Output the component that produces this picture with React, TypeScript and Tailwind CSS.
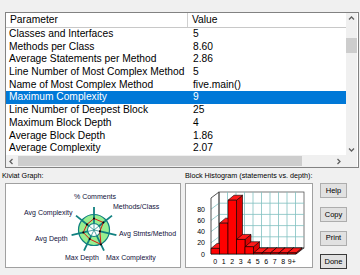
import React from "react";

const rows: [string, string][] = [
  ["Classes and Interfaces", "5"],
  ["Methods per Class", "8.60"],
  ["Average Statements per Method", "2.86"],
  ["Line Number of Most Complex Method", "5"],
  ["Name of Most Complex Method", "five.main()"],
  ["Maximum Complexity", "9"],
  ["Line Number of Deepest Block", "25"],
  ["Maximum Block Depth", "4"],
  ["Average Block Depth", "1.86"],
  ["Average Complexity", "2.07"],
];

const Chevron = ({ dir }: { dir: "up" | "down" | "left" | "right" }) => {
  const pts = {
    up: "3,6.5 5.5,4 8,6.5",
    down: "3,4.5 5.5,7 8,4.5",
    left: "6.5,3 4,5.5 6.5,8",
    right: "4.5,3 7,5.5 4.5,8",
  }[dir];
  return (
    <svg width="11" height="11" viewBox="0 0 11 11">
      <polyline points={pts} fill="none" stroke="#606060" strokeWidth="1.3" />
    </svg>
  );
};

const MetricsList = () => (
  <div className="w-[354px] h-[156px] border border-[#828282] bg-white grid grid-cols-[340px_11px] grid-rows-[142px_12px]">
    <div className="text-[10.25px] text-black">
      <div className="h-[15px] flex border-b border-[#c8c8c8] leading-[14px]">
        <div className="w-[182px] border-r border-[#d0d0d0] pl-[4px]">Parameter</div>
        <div className="pl-[4px]">Value</div>
      </div>
      {rows.map(([name, value], i) => (
        <div
          key={name}
          className={`h-[12.7px] leading-[12.7px] flex ${i === 5 ? "bg-[#0078d7] text-white" : ""}`}
        >
          <div className="w-[182px] pl-[3px] whitespace-nowrap overflow-hidden">{name}</div>
          <div className="pl-[5px]">{value}</div>
        </div>
      ))}
    </div>
    <div className="bg-[#f0f0f0] flex flex-col">
      <Chevron dir="up" />
      <div className="flex-1 pt-[14px]">
        <div className="h-[15px] bg-[#cdcdcd]" />
      </div>
      <Chevron dir="down" />
    </div>
    <div className="bg-[#f0f0f0] flex items-center">
      <Chevron dir="left" />
      <div className="w-[284px] h-[10px] ml-[1px] bg-[#cdcdcd]" />
      <div className="flex-1" />
      <div className="mr-[2px]">
        <Chevron dir="right" />
      </div>
    </div>
    <div className="bg-[#f0f0f0]" />
  </div>
);

const labels: { t: string; x: number; y: number }[] = [
  { t: "% Comments", x: 74, y: 198.5 },
  { t: "Methods/Class", x: 113, y: 208.5 },
  { t: "Avg Stmts/Method", x: 119, y: 235.5 },
  { t: "Max Complexity", x: 106, y: 259.5 },
  { t: "Max Depth", x: 65, y: 259.5 },
  { t: "Avg Depth", x: 35, y: 240.5 },
  { t: "Avg Complexity", x: 24, y: 214.5 },
];

const KiviatGraph = () => {
  const cx = 94;
  const cy = 230;
  const ang = (k: number) => ((-90 + (k * 360) / 7) * Math.PI) / 180;
  const pt = (k: number, r: number) => [cx + r * Math.cos(ang(k)), cy + r * Math.sin(ang(k))];
  const data = [11.5, 12, 6, 16, 10, 11, 9];
  const poly = data.map((r, k) => pt(k, r).join(",")).join(" ");
  return (
    <svg width="174" height="83" viewBox="6 184 174 83">
      <circle cx={cx} cy={cy} r="15.5" fill="#98ee90" stroke="#108080" strokeWidth="1.2" />
      <circle cx={cx} cy={cy} r="6.5" fill="#fff" />
      {data.map((_, k) => {
        const [x1, y1] = pt(k, 6.5);
        const [x2, y2] = pt(k, 23);
        const [x3, y3] = pt(k, 0);
        return (
          <g key={k}>
            <line x1={x1} y1={y1} x2={x2} y2={y2} stroke="#108080" strokeWidth="1.8" />
            <line x1={x3} y1={y3} x2={x1} y2={y1} stroke="#108080" strokeWidth="0.7" />
          </g>
        );
      })}
      <circle cx={cx} cy={cy} r="6.5" fill="none" stroke="#108080" strokeWidth="1.1" />
      <polygon points={poly} fill="none" stroke="#e00000" strokeWidth="0.9" />
      {data.map((r, k) => {
        const [x, y] = pt(k, r);
        return <circle key={k} cx={x} cy={y} r="1" fill="#000" />;
      })}
      {labels.map((l) => (
        <text key={l.t} x={l.x} y={l.y} fontSize="7" fill="#10103a" fontFamily="Liberation Sans, Arial, sans-serif">
          {l.t}
        </text>
      ))}
    </svg>
  );
};

const BlockHistogram = () => {
  const x0 = 211;
  const y0 = 254;
  const w = 8.5;
  const s = 0.56;
  const dx = 8;
  const dy = -6;
  const bdx = 6;
  const bdy = -5;
  const top = 100 * s;
  const values = [10, 55, 96, 26, 13, 2, 2, 2, 2, 2];
  const grid = "#80c0c0";
  const edge = "#404040";
  return (
    <svg width="126" height="83" viewBox="186 184 126 83" fontFamily="Liberation Sans, Arial, sans-serif">
      {/* back wall */}
      <rect x={x0 + dx} y={y0 + dy - top} width={10 * w} height={top} fill="#fff" stroke={edge} strokeWidth="0.7" />
      {[20, 40, 60, 80].map((v) => (
        <g key={v}>
          <line x1={x0 + dx} y1={y0 + dy - v * s} x2={x0 + dx + 10 * w} y2={y0 + dy - v * s} stroke={grid} strokeWidth="0.8" />
          <line x1={x0} y1={y0 - v * s} x2={x0 + dx} y2={y0 + dy - v * s} stroke={grid} strokeWidth="0.8" />
        </g>
      ))}
      {Array.from({ length: 9 }, (_, i) => i + 1).map((i) => (
        <g key={i}>
          <line x1={x0 + dx + i * w} y1={y0 + dy - top} x2={x0 + dx + i * w} y2={y0 + dy} stroke={grid} strokeWidth="0.8" />
          <line x1={x0 + i * w} y1={y0} x2={x0 + dx + i * w} y2={y0 + dy} stroke={grid} strokeWidth="0.8" />
        </g>
      ))}
      {/* left wall + floor outline */}
      <polygon
        points={`${x0},${y0} ${x0},${y0 - top} ${x0 + dx},${y0 + dy - top} ${x0 + dx},${y0 + dy}`}
        fill="none"
        stroke={edge}
        strokeWidth="0.9"
      />
      <polygon
        points={`${x0},${y0} ${x0 + 10 * w},${y0} ${x0 + 10 * w + dx},${y0 + dy} ${x0 + dx},${y0 + dy}`}
        fill="none"
        stroke={edge}
        strokeWidth="0.8"
      />
      {values.map((v, i) => {
        const l = x0 + i * w;
        const r = l + w;
        const t = y0 - v * s;
        return (
          <g key={i} stroke="#000" strokeWidth="0.6" strokeLinejoin="round">
            <polygon points={`${r},${t} ${r + bdx},${t + bdy} ${r + bdx},${y0 + bdy} ${r},${y0}`} fill="#e00000" />
            <polygon points={`${l},${t} ${r},${t} ${r + bdx},${t + bdy} ${l + bdx},${t + bdy}`} fill="#ff1a1a" />
            <rect x={l} y={t} width={w} height={v * s} fill="#ff0000" />
          </g>
        );
      })}
      {[0, 20, 40, 60, 80].map((v) => (
        <text key={v} x="205" y={y0 - v * s + 2.5} fontSize="7" textAnchor="end" fill="#000">
          {v}
        </text>
      ))}
      {["0", "1", "2", "3", "4", "5", "6", "7", "8", "9+"].map((t, i) => (
        <text key={t} x={x0 + (i + 0.5) * w} y="263.5" fontSize="7" textAnchor="middle" fill="#000">
          {t}
        </text>
      ))}
    </svg>
  );
};

const Button = ({ label, primary }: { label: string; primary?: boolean }) => (
  <div
    className={`w-[27px] h-[15px] bg-[#e1e1e1] border flex items-center justify-center text-[7.5px] text-black ${
      primary ? "border-[#3a3a3a]" : "border-[#adadad]"
    }`}
  >
    {label}
  </div>
);

export default function App() {
  return (
    <div className="w-[360px] h-[275px] bg-[#f0f0f0] overflow-hidden font-['Liberation_Sans',Arial,sans-serif]">
      <div className="pt-[12px] pl-[5px]">
        <MetricsList />
      </div>
      <div className="flex pt-[3px]">
        <div className="w-[181px] flex flex-col">
          <div className="h-[12px] leading-[10px] text-[7.2px] pl-[2px] text-black">Kiviat Graph:</div>
          <div className="ml-[5px] w-[176px] h-[85px] border border-[#a0a0a0] bg-white">
            <KiviatGraph />
          </div>
        </div>
        <div className="ml-[4px] w-[128px] flex flex-col">
          <div className="h-[12px] leading-[10px] text-[7.2px] text-black whitespace-nowrap">
            Block Histogram (statements vs. depth):
          </div>
          <div className="w-[128px] h-[85px] border border-[#a0a0a0] bg-white">
            <BlockHistogram />
          </div>
        </div>
        <div className="ml-[7px] pt-[12px] flex flex-col gap-[8.8px]">
          <Button label="Help" />
          <Button label="Copy" />
          <Button label="Print" />
          <Button label="Done" primary />
        </div>
      </div>
    </div>
  );
}
